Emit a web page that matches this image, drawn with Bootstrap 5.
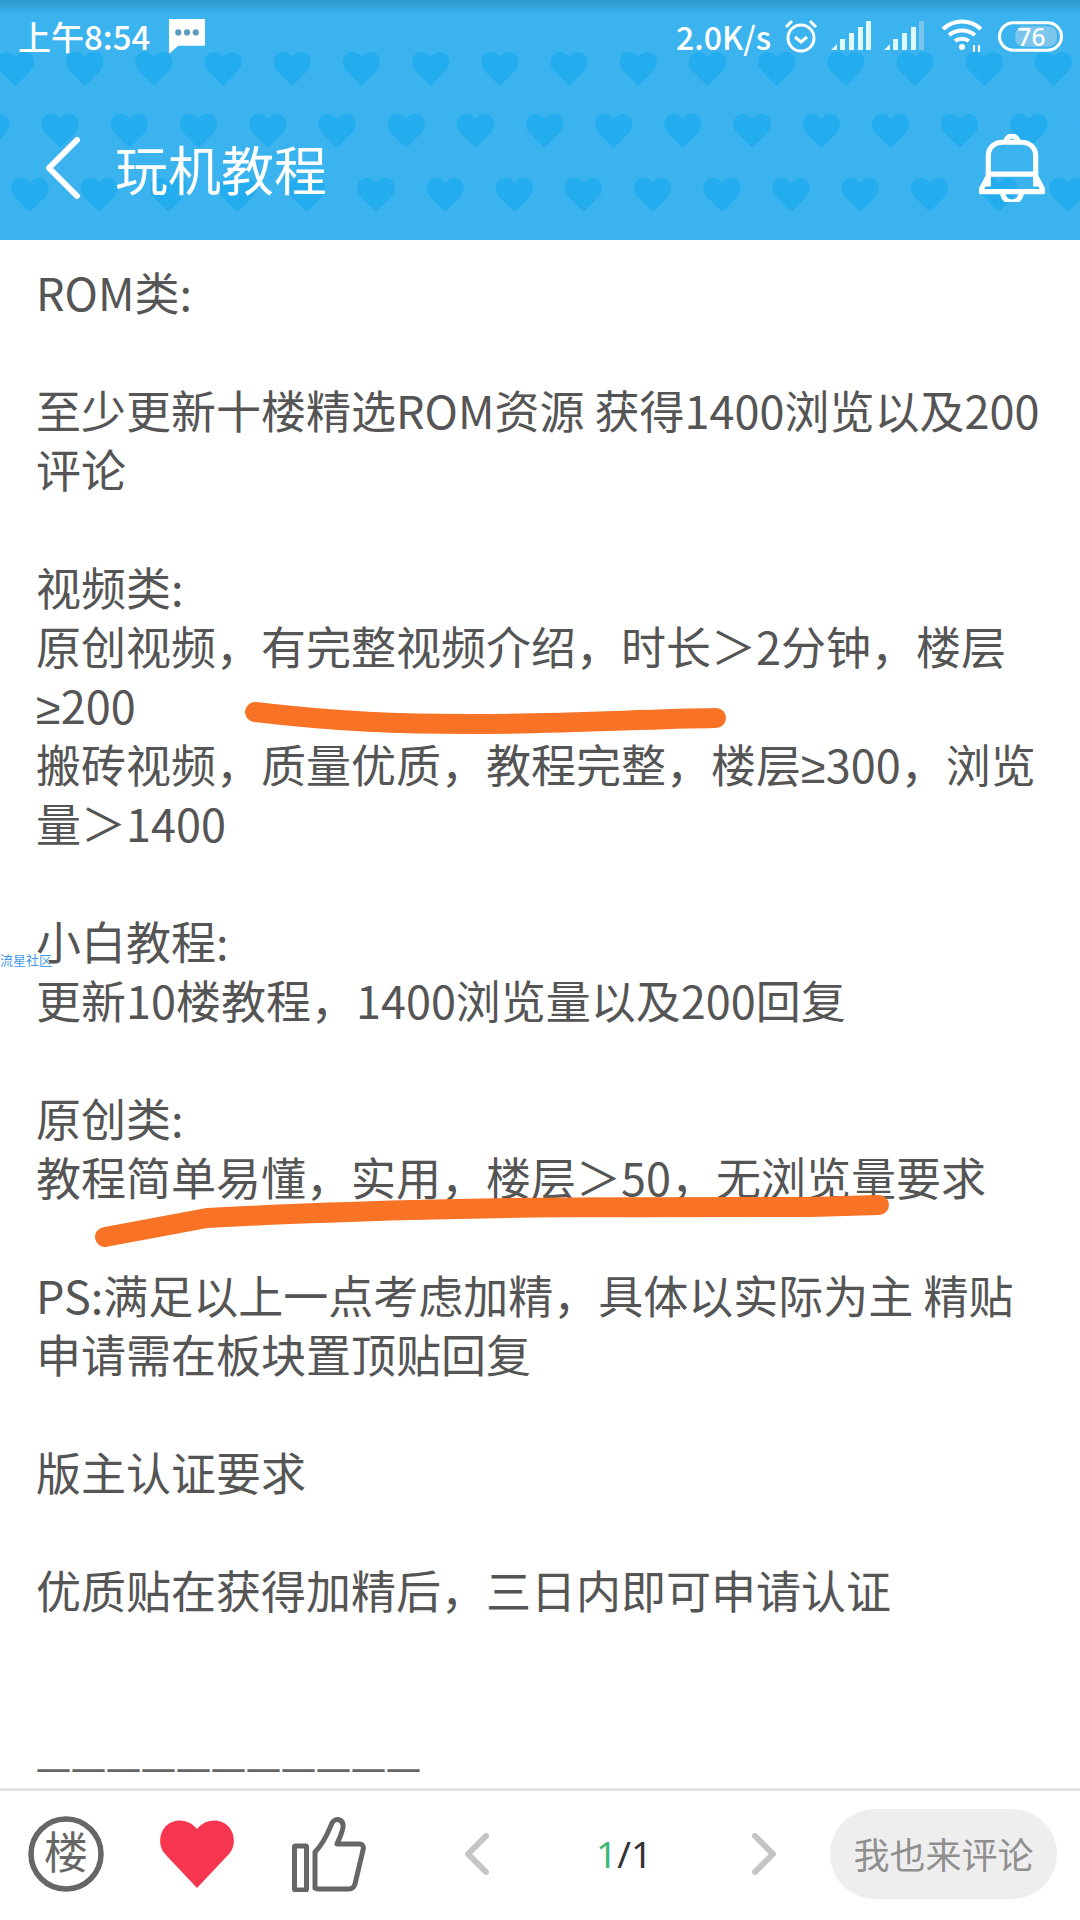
<!DOCTYPE html>
<html lang="en">
<head>
<meta charset="UTF-8">
<title>玩机教程</title>
<link rel="stylesheet" href="https://cdn.jsdelivr.net/npm/bootstrap@5.3.0/dist/css/bootstrap.min.css">
<style>
html, body { margin: 0; height: 1920px; overflow: hidden; background: #fff; }
body { font-family: "Noto Sans CJK SC", "Noto Sans", sans-serif; }
.screen { width: 1080px; height: 1920px; }
.app-head { height: 240px; flex: none; background: #3ab3ee; color: #fff; }
.head-shade { left: 0; right: 0; top: 0; height: 14px; background: linear-gradient(#2f98c8, #3ab3ee); }
.hearts { left: 0; top: 0; }
.status-row { height: 72px; padding: 0 17px 0 18px; line-height: 1; font-weight: 500; }
.status-left { gap: 19px; font-size: 33px; }
.status-right { gap: 13px; font-size: 32px; }
.title-row { height: 168px; padding: 24px 35px 0 45px; }
.head-title { font-size: 53px; margin-left: 34px; line-height: 1; }
.post-body { flex: 1; overflow: hidden; padding: 22px 0 0 36px; color: #555; font-size: 45px; line-height: 59px; white-space: nowrap; }
.post-body p { margin: 0 0 59px; padding: 0; }
.post-body p.para-gap { margin-bottom: 118px; }
.latin-sign { font-family: "Noto Sans", sans-serif; line-height: 1; }
.post-body p.dash-line { font-family: "Noto Sans", sans-serif; font-size: 35px; color: #666; }
.pen-strokes { left: 0; top: 0; }
.site-mark { left: 0; top: 953px; font-size: 13px; line-height: 14px; color: #3f9be8; }
.app-foot { height: 132px; flex: none; border-top: 3px solid #e2e2e2; padding: 0 0 4px 28px; }
.foot-heart { margin-left: 56px; }
.foot-thumb { margin-left: 58px; }
.foot-prev { margin-left: 99px; }
.page-num { width: 50px; font-size: 37px; color: #333; line-height: 1; margin: 0 106px 0 107px; font-family: "Noto Sans", sans-serif; }
.page-cur { color: #3eb878; }
.reply-btn { width: 227px; height: 90px; border-radius: 45px; background: #eee; color: #8f8f8f; font-size: 36px; line-height: 88px; text-align: center; margin-left: 54px; }
</style>
</head>
<body>
<div class="screen d-flex flex-column position-relative">

  <!-- Header -->
  <header class="app-head position-relative">
    <svg class="hearts position-absolute" id="hearts" width="1080" height="240"></svg>
    <div class="head-shade position-absolute"></div>
    <div class="status-row d-flex justify-content-between align-items-center position-relative">
      <div class="status-left d-flex align-items-center">
        <span>上午8:54</span>
        <svg width="36" height="34" viewBox="0 0 35 33"><path d="M0 0H35V26H9L1 33H0Z" fill="#fff"/><circle cx="9" cy="13" r="3" fill="#5b9dc0"/><circle cx="17.500" cy="13" r="3" fill="#5b9dc0"/><circle cx="26" cy="13" r="3" fill="#5b9dc0"/></svg>
      </div>
      <div class="status-right d-flex align-items-center">
        <span>2.0K/s</span>
        <svg width="34" height="34" viewBox="0 0 34 34" fill="none" stroke="#fff"><circle cx="17" cy="19" r="13" stroke-width="3"/><path d="M11 18l6 5 6-5" stroke-width="3"/><path d="M2 8l6-6M32 8l-6-6" stroke-width="3"/></svg>
        <svg width="40" height="30" viewBox="0 0 40 30" fill="#dffaff"><path d="M0 29l6-6v6zM9 18h5v11H9zM18 12h5v17h-5zM27 6h5v23h-5z"/><path d="M35 0h5v29h-5z"/></svg>
        <svg class="me-1" width="40" height="30" viewBox="0 0 40 30" fill="#dffaff"><path d="M0 29l6-6v6zM9 18h5v11H9zM18 12h5v17h-5zM27 6h5v23h-5z"/><path d="M35 0h5v29h-5z" fill="#7cc6ee"/></svg>
        <svg width="44" height="34" viewBox="0 0 44 34" fill="none" stroke="#fff" stroke-width="4"><path d="M2 10c11-10 27-10 38 0M8 16c8-6 18-6 26 0M14 22c4-3 10-3 14 0"/><circle cx="21" cy="28" r="3" fill="#fff" stroke="none"/><path d="M33 26v7M38 26v7" stroke-width="2"/></svg>
        <svg width="65" height="31" viewBox="0 0 64 30"><rect x="1.500" y="1.500" width="61" height="27" rx="13.500" fill="none" stroke="#fff" stroke-width="3"/><rect x="17" y="5" width="41" height="20" rx="8" fill="#7cc6ee"/><text x="33" y="24" font-size="24" font-weight="500" fill="#fff" text-anchor="middle" font-family="Noto Sans, sans-serif">76</text></svg>
      </div>
    </div>
    <div class="title-row d-flex align-items-center position-relative">
      <svg width="36" height="62" viewBox="0 0 36 62" fill="none" stroke="#fff" stroke-width="6" stroke-linecap="round" stroke-linejoin="round"><path d="M32 3L4 31l28 28"/></svg>
      <span class="head-title">玩机教程</span>
      <svg class="ms-auto" width="66" height="68" viewBox="0 1 64 66" fill="none" stroke="#fff" stroke-width="5" stroke-linejoin="round"><path d="M9 52V22C9 14 15 9 23 9H41C49 9 55 14 55 22V52"/><path d="M26 9a6 6 0 0 1 12 0"/><path d="M10 40H54L62 55V57H2V55Z"/><path d="M23 58a9 9 0 0 0 18 0"/></svg>
    </div>
  </header>

  <!-- Post text -->
  <main class="post-body">
    <p>ROM类:</p>
    <p>至少更新十楼精选ROM资源 获得1400浏览以及200<br>评论</p>
    <p>视频类:<br>原创视频，有完整视频介绍，时长＞2分钟，楼层<br><span class="latin-sign">≥</span>200<br>搬砖视频，质量优质，教程完整，楼层<span class="latin-sign">≥</span>300，浏览<br>量＞1400</p>
    <p>小白教程:<br>更新10楼教程，1400浏览量以及200回复</p>
    <p>原创类:<br>教程简单易懂，实用，楼层＞50，无浏览量要求</p>
    <p>PS:满足以上一点考虑加精，具体以实际为主 精贴<br>申请需在板块置顶贴回复</p>
    <p>版主认证要求</p>
    <p class="para-gap">优质贴在获得加精后，三日内即可申请认证</p>
    <p class="dash-line">———————————</p>
  </main>

  <!-- Pen strokes drawn on the screenshot -->
  <svg class="pen-strokes position-absolute" width="1080" height="1920" fill="none" stroke="#f97326" stroke-width="20" stroke-linecap="round" stroke-linejoin="round">
    <path d="M255 712C340 722 400 724 470 724C570 724 640 719 716 718"/>
    <path d="M105 1237L207 1218C280 1214 340 1212 413 1210C500 1207 600 1207 810 1207L879 1205"/>
  </svg>
  <div class="site-mark position-absolute">流星社区</div>

  <!-- Bottom bar -->
  <footer class="app-foot d-flex align-items-center">
    <svg width="76" height="76" viewBox="0 0 76 76"><circle cx="38" cy="38" r="35" fill="none" stroke="#666" stroke-width="5.500"/><text x="38" y="53" font-size="44" fill="#666" text-anchor="middle" font-family="Noto Sans CJK SC, sans-serif">楼</text></svg>
    <svg class="foot-heart" width="74" height="68" viewBox="0 0 74 68"><path d="M37 68L5 34C-2 26-1 14 5 7C13-2 28-2 37 9C46-2 61-2 69 7C75 14 76 26 69 34Z" fill="#f5364e"/></svg>
    <svg class="foot-thumb" width="74" height="76" viewBox="0 0 74 76" fill="none" stroke="#666" stroke-width="5" stroke-linejoin="round"><rect x="2.500" y="30" width="12" height="44" rx="1"/><path d="M23 72V36C33 26 36 16 40 7C43 1 52 3 51 11C50 18 47 23 45 28H67C71 28 72 31 71 34L63 68C62 71 60 73 57 73H27C24 73 23 72 23 70Z"/></svg>
    <svg class="foot-prev" width="24" height="42" viewBox="0 0 24 42" fill="none" stroke="#c4c4c4" stroke-width="6" stroke-linecap="round" stroke-linejoin="round"><path d="M21 3L3 21l18 18"/></svg>
    <span class="page-num"><span class="page-cur">1</span>/1</span>
    <svg width="24" height="42" viewBox="0 0 24 42" fill="none" stroke="#c4c4c4" stroke-width="6" stroke-linecap="round" stroke-linejoin="round"><path d="M3 3l18 18L3 39"/></svg>
    <div class="reply-btn">我也来评论</div>
  </footer>
</div>

<script>
  // header wallpaper, three rows of hearts
  let svg = document.getElementById("hearts");
  let rows = [{ y: 52, x: 15.500 }, { y: 114, x: -9 }, { y: 178, x: 30 }];
  let out = "";
  rows.forEach(row => {
    for (let k = 0; k < 17; k++) {
      let x = row.x + k * 69.200;
      out += `<path transform="translate(${x} ${row.y})" fill="#24adee" d="M0 34L-15 19C-22 11-18 0-9 0C-5 0-2 2 0 5C2 2 5 0 9 0C18 0 22 11 15 19Z"/>`;
    }
  });
  svg.innerHTML = out;
</script>
<script src="https://cdn.jsdelivr.net/npm/bootstrap@5.3.0/dist/js/bootstrap.bundle.min.js"></script>
</body>
</html>
